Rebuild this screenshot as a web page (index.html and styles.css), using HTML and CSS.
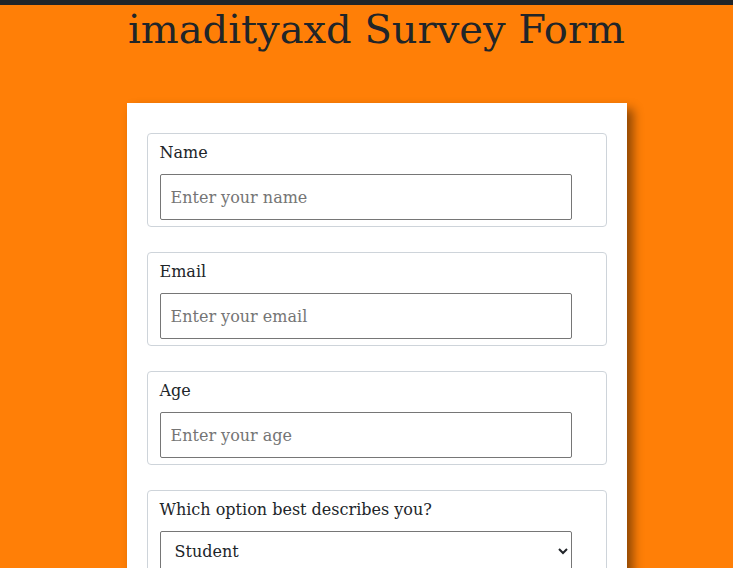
FILE: index.html
```html
<!DOCTYPE html>
<html lang="en">
<head>
<meta charset="utf-8">
<title>imadityaxd Survey Form</title>
<link rel="stylesheet" href="styles.css">
</head>
<body>
<div class="page">
  <h1 id="title" class="title">imadityaxd Survey Form</h1>
  <form id="survey-form" class="card">
    <fieldset class="group">
      <label class="label" for="name">Name</label>
      <input class="field" id="name" type="text" placeholder="Enter your name">
    </fieldset>
    <fieldset class="group">
      <label class="label" for="email">Email</label>
      <input class="field" id="email" type="email" placeholder="Enter your email">
    </fieldset>
    <fieldset class="group">
      <label class="label" for="number">Age</label>
      <input class="field" id="number" type="number" placeholder="Enter your age">
    </fieldset>
    <fieldset class="group">
      <label class="label" for="dropdown">Which option best describes you?</label>
      <select class="field select" id="dropdown">
        <option>Student</option>
        <option>Full Time Job</option>
        <option>Prefer not to say</option>
      </select>
    </fieldset>
  </form>
</div>
</body>
</html>
```

FILE: styles.css
```css
html, body {
  margin: 0;
  padding: 0;
}
body {
  background: #ff7f07;
  border-top: 5px solid #212529;
  font-family: "DejaVu Serif", serif;
  color: #212529;
}
.page {
  padding-left: 20px;
  display: flex;
  flex-direction: column;
  align-items: center;
}
.title {
  margin: 0;
  font-weight: normal;
  font-size: 40px;
  line-height: 49px;
  text-align: center;
}
.card {
  margin-top: 49px;
  width: 460px;
  padding: 30px 20px;
  background: #fff;
  box-shadow: 6px 6px 10px rgba(0, 0, 0, 0.45);
  display: flex;
  flex-direction: column;
  gap: 25px;
}
.group {
  margin: 0;
  border: 1px solid #ced4da;
  border-radius: 4px;
  padding: 9px 12px 6px;
  display: flex;
  flex-direction: column;
  align-items: flex-start;
  gap: 12px;
}
.label {
  font-size: 16px;
  line-height: 19px;
}
.field {
  box-sizing: border-box;
  width: 412px;
  height: 46px;
  margin: 0;
  padding: 0 10px;
  border: 1px solid #767676;
  border-radius: 2px;
  font-family: "DejaVu Serif", serif;
  font-size: 16px;
  color: #212529;
  background: #fff;
}
.field::placeholder {
  color: #757575;
}
.select {
  height: 40px;
  padding: 0 10px;
  font-size: 16px;
}
```
